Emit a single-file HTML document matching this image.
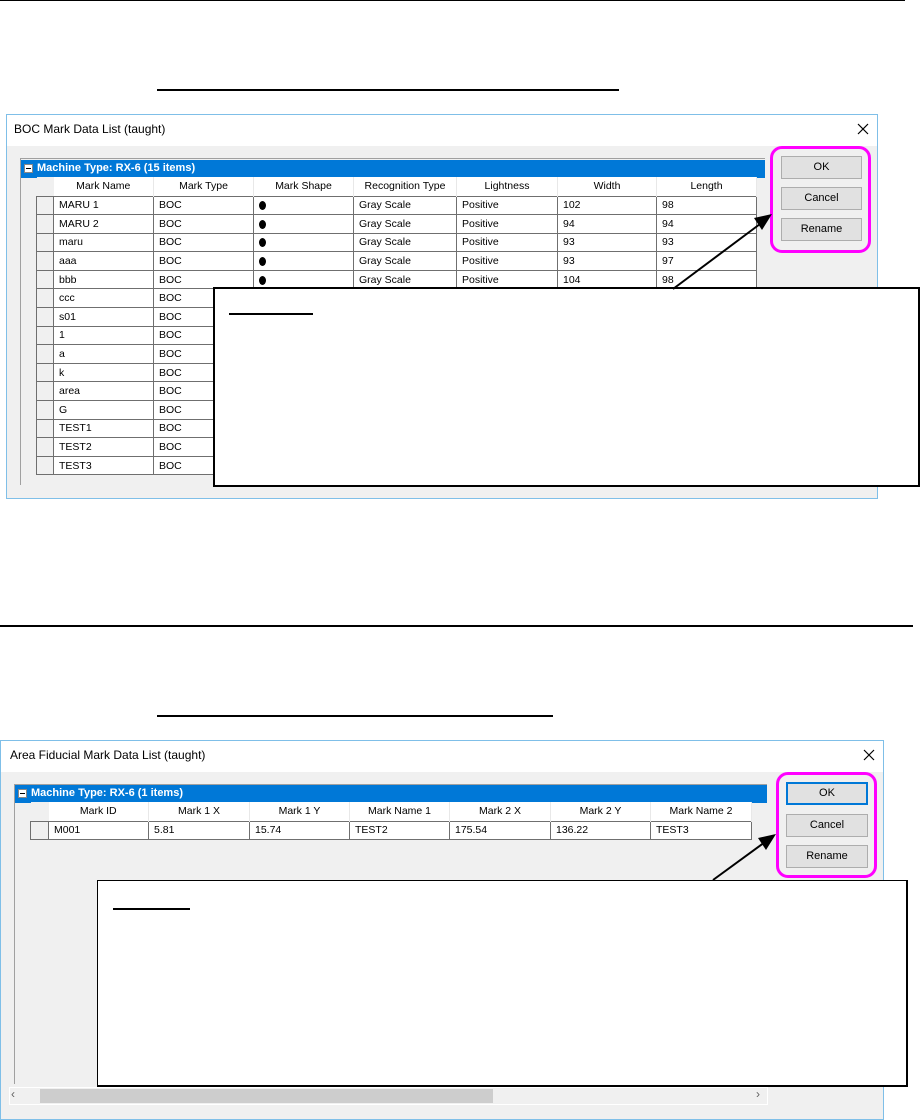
<!DOCTYPE html>
<html><head><meta charset="utf-8"><style>
*{margin:0;padding:0;box-sizing:border-box}
body{width:920px;height:1120px;background:#fff;position:relative;overflow:hidden;font-family:"Liberation Sans",sans-serif;font-size:11px;color:#000}
.abs{position:absolute}
.dlg{position:absolute;border:1px solid #7fbfe8;background:#f0f0f0}
.ttl{position:absolute;left:0;right:0;top:0;height:31px;background:#fff;font-size:12px;padding:7px 0 0 7px}
.x{position:absolute;right:8px;top:8px}
.grid{position:absolute;background:#f0f0f0;border-left:1px solid #a0a0a0;border-top:1px solid #a0a0a0}
.bar{position:absolute;left:0;right:0;height:18px;background:#0078d7;color:#fff;font-weight:bold;font-size:11px;padding:2px 0 0 16px}
.bar i{position:absolute;left:3px;top:4px;width:9px;height:9px;background:#fff;border:1px solid #888}
.bar i:after{content:"";position:absolute;left:1px;top:3px;width:5px;height:1px;background:#000}
table{position:absolute;border-collapse:collapse;table-layout:fixed}
td{height:18.6px;border:1px solid #6f6f6f;background:#fff;padding:0 0 0 5px;font-size:10.5px;white-space:nowrap;overflow:hidden}
td.s{background:#f0f0f0;border-color:#6f6f6f}
th{height:19px;background:#fff;font-weight:normal;font-size:10.5px;border-right:1px solid #e8e8e8;text-align:center}
th.s{background:#f0f0f0;border:none}
.btn{position:absolute;background:#e1e1e1;border:1px solid #adadad;font-size:11px;text-align:center;line-height:21px}
.mag{position:absolute;border:3px solid #ff00ff;border-radius:12px}
.call{position:absolute;background:#fff;border:2px solid #000}
.dot{display:inline-block;width:7px;height:9px;border-radius:50%;background:#000;vertical-align:-2px}
</style></head><body>
<div class="abs" style="left:0;top:0;width:905px;height:1px;background:#000"></div>
<div class="abs" style="left:157px;top:89px;width:462px;height:2px;background:#000"></div>
<div class="abs" style="left:0;top:625px;width:913px;height:2px;background:#000"></div>
<div class="abs" style="left:157px;top:715px;width:396px;height:2px;background:#000"></div>

<!-- Dialog 1 -->
<div class="dlg" style="left:6px;top:114px;width:872px;height:385px">
 <div class="ttl">BOC Mark Data List (taught)<svg class="x" width="12" height="12"><path d="M1 1L11 11M11 1L1 11" stroke="#000" stroke-width="1.2"/></svg></div>
 <div class="grid" style="left:13px;top:43px;width:745px;height:327px">
  <div class="bar" style="top:1px"><i></i>Machine Type: RX-6 (15 items)</div>
  <table style="left:15px;top:18px;width:720px">
   <colgroup><col style="width:17px"><col style="width:100px"><col style="width:100px"><col style="width:100px"><col style="width:103px"><col style="width:101px"><col style="width:99px"><col style="width:100px"></colgroup>
   <tr><th class="s"></th><th>Mark Name</th><th>Mark Type</th><th>Mark Shape</th><th>Recognition Type</th><th>Lightness</th><th>Width</th><th>Length</th></tr>
   <tr><td class="s"></td><td>MARU 1</td><td>BOC</td><td><span class="dot"></span></td><td>Gray Scale</td><td>Positive</td><td>102</td><td>98</td></tr>
   <tr><td class="s"></td><td>MARU 2</td><td>BOC</td><td><span class="dot"></span></td><td>Gray Scale</td><td>Positive</td><td>94</td><td>94</td></tr>
   <tr><td class="s"></td><td>maru</td><td>BOC</td><td><span class="dot"></span></td><td>Gray Scale</td><td>Positive</td><td>93</td><td>93</td></tr>
   <tr><td class="s"></td><td>aaa</td><td>BOC</td><td><span class="dot"></span></td><td>Gray Scale</td><td>Positive</td><td>93</td><td>97</td></tr>
   <tr><td class="s"></td><td>bbb</td><td>BOC</td><td><span class="dot"></span></td><td>Gray Scale</td><td>Positive</td><td>104</td><td>98</td></tr>
   <tr><td class="s"></td><td>ccc</td><td>BOC</td><td></td><td></td><td></td><td></td><td></td></tr>
   <tr><td class="s"></td><td>s01</td><td>BOC</td><td></td><td></td><td></td><td></td><td></td></tr>
   <tr><td class="s"></td><td>1</td><td>BOC</td><td></td><td></td><td></td><td></td><td></td></tr>
   <tr><td class="s"></td><td>a</td><td>BOC</td><td></td><td></td><td></td><td></td><td></td></tr>
   <tr><td class="s"></td><td>k</td><td>BOC</td><td></td><td></td><td></td><td></td><td></td></tr>
   <tr><td class="s"></td><td>area</td><td>BOC</td><td></td><td></td><td></td><td></td><td></td></tr>
   <tr><td class="s"></td><td>G</td><td>BOC</td><td></td><td></td><td></td><td></td><td></td></tr>
   <tr><td class="s"></td><td>TEST1</td><td>BOC</td><td></td><td></td><td></td><td></td><td></td></tr>
   <tr><td class="s"></td><td>TEST2</td><td>BOC</td><td></td><td></td><td></td><td></td><td></td></tr>
   <tr><td class="s"></td><td>TEST3</td><td>BOC</td><td></td><td></td><td></td><td></td><td></td></tr>
  </table>
 </div>
 <div class="btn" style="left:774px;top:41px;width:81px;height:23px">OK</div>
 <div class="btn" style="left:774px;top:72px;width:81px;height:23px">Cancel</div>
 <div class="btn" style="left:774px;top:103px;width:81px;height:23px">Rename</div>
</div>
<div class="mag" style="left:770px;top:146px;width:101px;height:107px"></div>

<!-- Dialog 2 -->
<div class="dlg" style="left:0;top:740px;width:884px;height:380px">
 <div class="ttl" style="padding-left:9px">Area Fiducial Mark Data List (taught)<svg class="x" width="12" height="12"><path d="M1 1L11 11M11 1L1 11" stroke="#000" stroke-width="1.2"/></svg></div>
 <div class="grid" style="left:13px;top:43px;width:753px;height:300px">
  <div class="bar" style="top:0"><i></i>Machine Type: RX-6 (1 items)</div>
  <table style="left:15px;top:17px;width:721px">
   <colgroup><col style="width:18px"><col style="width:100px"><col style="width:101px"><col style="width:100px"><col style="width:100px"><col style="width:101px"><col style="width:100px"><col style="width:101px"></colgroup>
   <tr><th class="s"></th><th>Mark ID</th><th>Mark 1 X</th><th>Mark 1 Y</th><th>Mark Name 1</th><th>Mark 2 X</th><th>Mark 2 Y</th><th>Mark Name 2</th></tr>
   <tr><td class="s"></td><td>M001</td><td>5.81</td><td>15.74</td><td>TEST2</td><td>175.54</td><td>136.22</td><td>TEST3</td></tr>
  </table>
 </div>
 <div class="abs" style="left:8px;top:346px;width:759px;height:18px;background:#f0f0f0;border:1px solid #fff"></div>
 <div class="abs" style="left:39px;top:348px;width:453px;height:14px;background:#cdcdcd"></div>
 <div class="abs" style="left:10px;top:346px;width:22px;font-size:12px;color:#606060">‹</div>
 <div class="abs" style="left:755px;top:346px;font-size:12px;color:#606060">›</div>
 <div class="btn" style="left:785px;top:41px;width:82px;height:23px;border:2px solid #0078d7;line-height:19px">OK</div>
 <div class="btn" style="left:785px;top:73px;width:82px;height:23px">Cancel</div>
 <div class="btn" style="left:785px;top:104px;width:82px;height:23px">Rename</div>
</div>
<div class="mag" style="left:776px;top:772px;width:101px;height:106px"></div>

<!-- Callouts -->
<div class="call" style="left:213px;top:287px;width:707px;height:200px">
 <div class="abs" style="left:14px;top:24px;width:84px;height:2px;background:#000"></div>
</div>
<div class="call" style="left:97px;top:880px;width:811px;height:207px;border-width:1px 2px 2px 1px">
 <div class="abs" style="left:15px;top:27px;width:77px;height:2px;background:#000"></div>
</div>

<svg class="abs" style="left:0;top:0" width="920" height="1120">
 <line x1="673" y1="289" x2="760" y2="224" stroke="#000" stroke-width="2"/>
 <polygon points="772,214 754,218 762,230" fill="#000"/>
 <line x1="713" y1="880" x2="765" y2="842" stroke="#000" stroke-width="2"/>
 <polygon points="776,834 758,838 766,850" fill="#000"/>
</svg>
</body></html>
